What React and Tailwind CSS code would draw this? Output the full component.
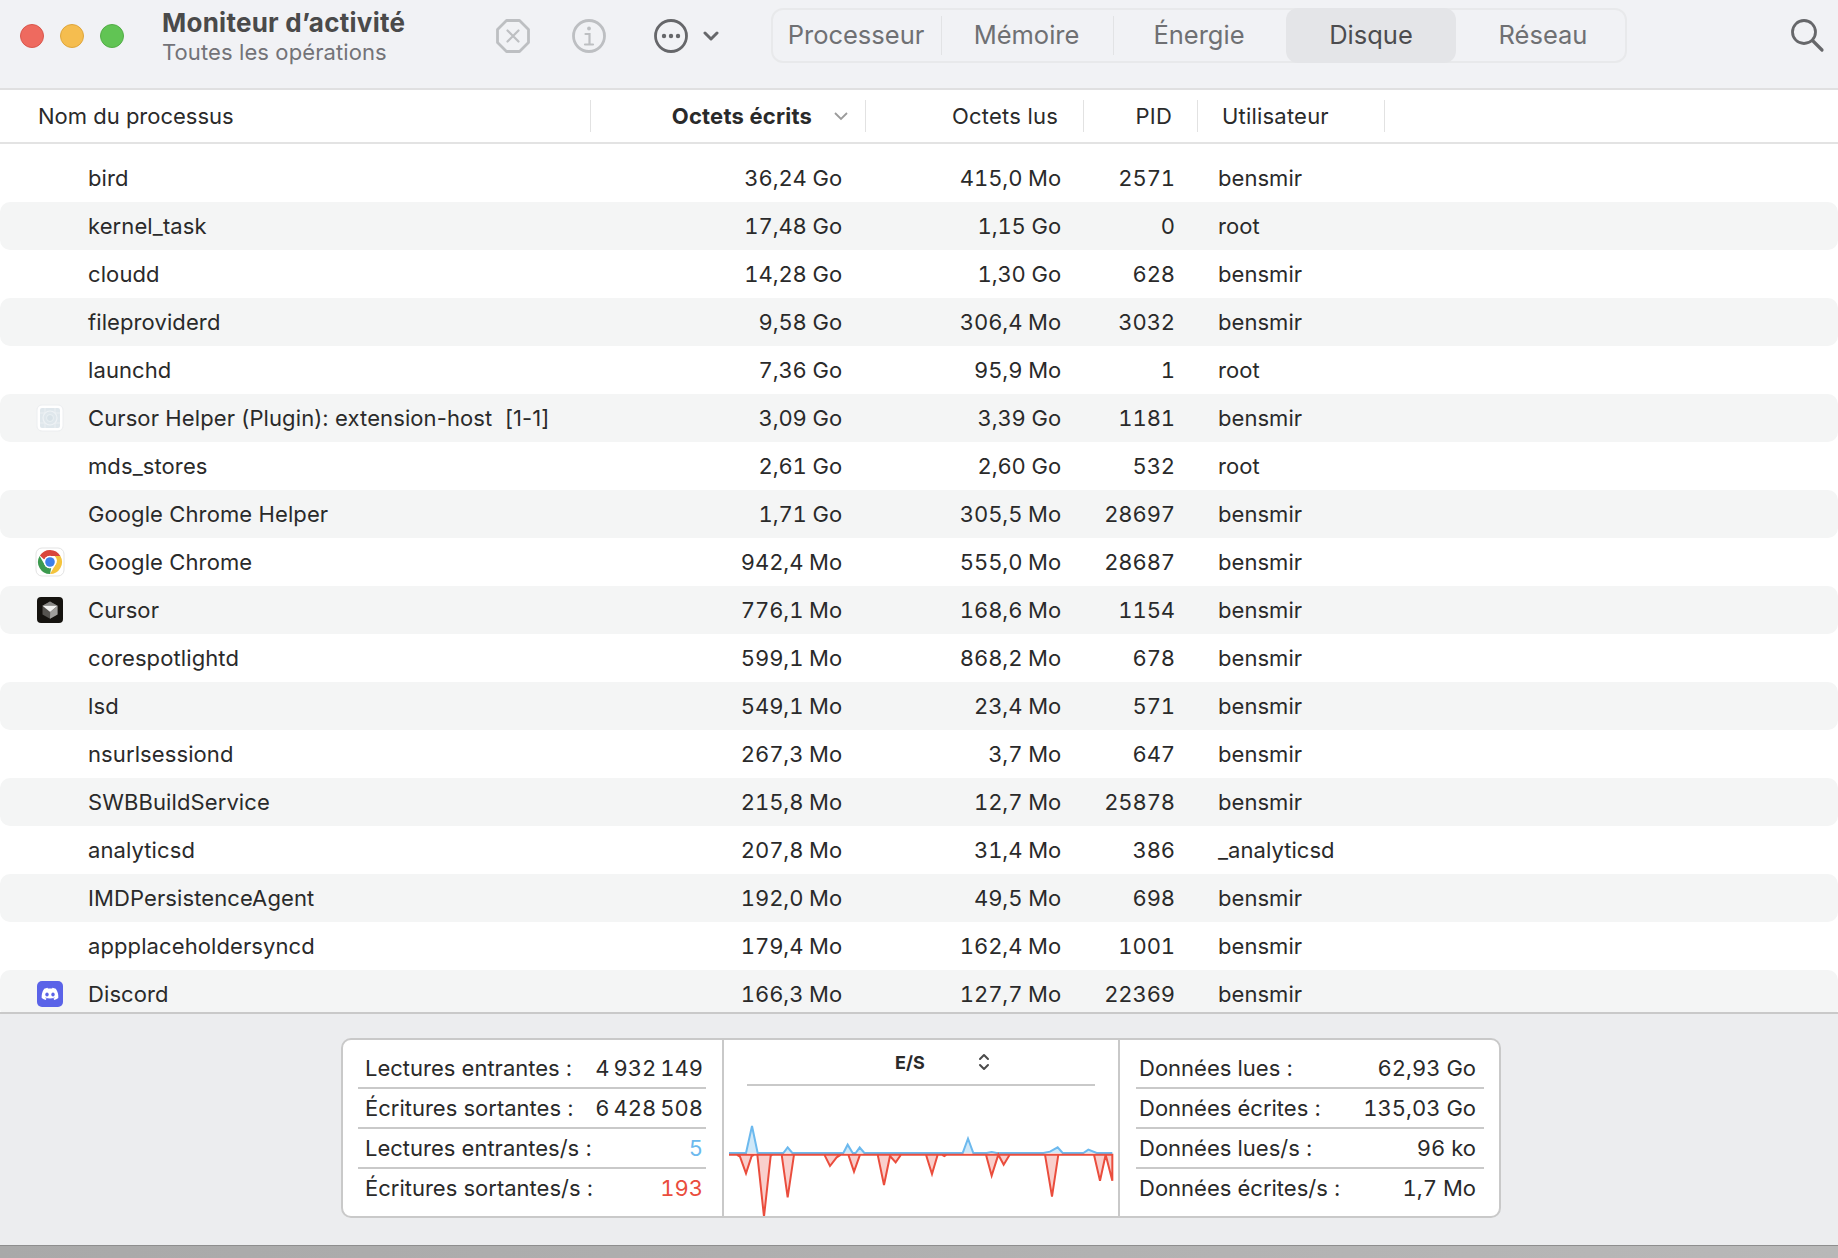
import React from "react";

const F = { fontFamily: "Inter, 'Liberation Sans', sans-serif" };

const rows = [
  ["bird", "36,24 Go", "415,0 Mo", "2571", "bensmir"],
  ["kernel_task", "17,48 Go", "1,15 Go", "0", "root"],
  ["cloudd", "14,28 Go", "1,30 Go", "628", "bensmir"],
  ["fileproviderd", "9,58 Go", "306,4 Mo", "3032", "bensmir"],
  ["launchd", "7,36 Go", "95,9 Mo", "1", "root"],
  ["Cursor Helper (Plugin): extension-host  [1-1]", "3,09 Go", "3,39 Go", "1181", "bensmir", "plugin"],
  ["mds_stores", "2,61 Go", "2,60 Go", "532", "root"],
  ["Google Chrome Helper", "1,71 Go", "305,5 Mo", "28697", "bensmir"],
  ["Google Chrome", "942,4 Mo", "555,0 Mo", "28687", "bensmir", "chrome"],
  ["Cursor", "776,1 Mo", "168,6 Mo", "1154", "bensmir", "cursor"],
  ["corespotlightd", "599,1 Mo", "868,2 Mo", "678", "bensmir"],
  ["lsd", "549,1 Mo", "23,4 Mo", "571", "bensmir"],
  ["nsurlsessiond", "267,3 Mo", "3,7 Mo", "647", "bensmir"],
  ["SWBBuildService", "215,8 Mo", "12,7 Mo", "25878", "bensmir"],
  ["analyticsd", "207,8 Mo", "31,4 Mo", "386", "_analyticsd"],
  ["IMDPersistenceAgent", "192,0 Mo", "49,5 Mo", "698", "bensmir"],
  ["appplaceholdersyncd", "179,4 Mo", "162,4 Mo", "1001", "bensmir"],
  ["Discord", "166,3 Mo", "127,7 Mo", "22369", "bensmir", "discord"],
];

function PluginIcon() {
  return (
    <svg width="28" height="28" viewBox="0 0 28 28">
      <rect x="1" y="1" width="26" height="26" rx="5" fill="#fff" stroke="#eceef0" />
      <rect x="4" y="4" width="20" height="20" rx="2" fill="#dfe7ec" />
      <path d="M9 4v20M19 4v20M4 9h20M4 19h20" stroke="#eef2f5" strokeWidth="0.8" />
      <circle cx="14" cy="14" r="7" fill="#dfe7ec" stroke="#eef2f5" strokeWidth="1.2" />
      <circle cx="14" cy="14" r="3.500" fill="#d8e2e8" stroke="#eef2f5" strokeWidth="0.8" />
    </svg>
  );
}

function ChromeIcon() {
  return (
    <svg width="30" height="30" viewBox="0 0 30 30">
      <rect x="1" y="1" width="28" height="28" rx="6" fill="#fff" stroke="#e3e3e3" />
      <path d="M15 3a12 12 0 0 1 10.4 6H15a6 6 0 0 0-5.6 3.800L4.900 8.600A12 12 0 0 1 15 3z" fill="#d9463c" />
      <path d="M25.400 9A12 12 0 0 1 15 27l5.200-9a6 6 0 0 0-.6-9z" fill="#f4c33c" />
      <path d="M15 27A12 12 0 0 1 4.600 9l5.200 9a6 6 0 0 0 6.400 3z" fill="#3c9a4e" />
      <circle cx="15" cy="15" r="6.200" fill="#fff" />
      <circle cx="15" cy="15" r="4.800" fill="#3f7fe8" />
    </svg>
  );
}

function CursorIcon() {
  return (
    <svg width="26" height="26" viewBox="0 0 26 26">
      <rect width="26" height="26" rx="4" fill="#16130f" />
      <path d="M13 4.500l7.500 4.300v8.700L13 21.800 5.500 17.500V8.800z" fill="#56534f" />
      <path d="M5.500 8.800L13 4.500l7.500 4.300z" fill="#8a8885" />
      <path d="M5.500 8.800h15L13.200 15z" fill="#f4f3f1" />
      <path d="M20.500 8.800v8.700L13 21.800l.2-6.800z" fill="#a09e9b" />
    </svg>
  );
}

function DiscordIcon() {
  return (
    <svg width="26" height="26" viewBox="0 0 26 26">
      <rect width="26" height="26" rx="5" fill="#5a63e8" />
      <path
        d="M18.800 7.800a13 13 0 0 0-3.300-1l-.4.800a12 12 0 0 0-4.200 0l-.4-.8a13 13 0 0 0-3.300 1C5 11 4.500 14 4.700 17c1.400 1 2.700 1.600 4 2l.9-1.400-1.400-.7.300-.3c2.700 1.200 6.200 1.200 9 0l.3.300-1.400.7.900 1.400c1.300-.4 2.600-1 4-2 .3-3.500-.5-6.300-2.500-9.200z"
        fill="#fff"
      />
      <ellipse cx="10" cy="13.500" rx="1.700" ry="1.900" fill="#5a63e8" />
      <ellipse cx="16" cy="13.500" rx="1.700" ry="1.900" fill="#5a63e8" />
    </svg>
  );
}

const icons = {
  plugin: <PluginIcon />,
  chrome: <ChromeIcon />,
  cursor: <CursorIcon />,
  discord: <DiscordIcon />,
};

function Row({ r, i }) {
  return (
    <div
      className={
        "grid grid-cols-[100px_500px_242px_219px_114px_1fr] h-[48px] shrink-0 items-center text-[22px] text-[#2a2a2a] rounded-[10px] " +
        (i % 2 === 1 ? "bg-[#f4f5f5]" : "bg-white")
      }
    >
      <div className="flex justify-center w-[100px]">{r[5] ? icons[r[5]] : null}</div>
      <div className="-ml-[12px] whitespace-pre tracking-[0.1px]">{r[0]}</div>
      <div className="text-right tabular-nums tracking-[-0.1px]">{r[1]}</div>
      <div className="text-right tabular-nums tracking-[-0.1px]">{r[2]}</div>
      <div className="text-right tabular-nums tracking-[-0.1px]">{r[3]}</div>
      <div className="pl-[43px] tracking-[0.05px]">{r[4]}</div>
    </div>
  );
}

function HeadCell({ w, right, children }) {
  return (
    <div
      className={
        "h-[32px] flex items-center border-r border-[#e2e2e2] shrink-0 " + (right ? "justify-end" : "")
      }
      style={{ width: w }}
    >
      {children}
    </div>
  );
}

function StatRow({ label, value, cls, last, right }) {
  return (
    <div
      className={
        "flex justify-between items-center text-[22px] text-[#2a2a2a] " +
        (right ? "pl-[3px] pr-[8px] " : "pl-[7px] pr-[3px] ") +
        (last ? "h-[38px]" : "h-[40px] border-b-2 border-[#c9c9c9]")
      }
    >
      <span>{label}</span>
      <span className={"tabular-nums " + (cls || "")}>{value}</span>
    </div>
  );
}

function Chart() {
  return (
    <svg width="395" height="127" viewBox="27 180 1185 381" className="block">
      <path
        d="M42 369 H93 L111 288 L128 369 H205 L218 352 L232 369 H385 L398 344 L413 369 H422 L434 352 L448 369 H743 L759 326 L775 369 H815 L830 366 L845 369 H985 L1005 365 L1028 352 L1043 369 H1105 L1120 359 L1145 369 H1192"
        fill="#cfe8f8"
        stroke="#6cb9ee"
        strokeWidth="6"
      />
      <path
        d="M42 374 H65 L75 380 L93 430 L110 378 L118 374 H127 L147 560 L167 378 L172 374 H200 L218 502 L237 374 H328 L345 408 L365 382 L378 374 H400 L417 425 L435 374 H488 L507 465 L525 378 L542 397 L558 374 H633 L651 432 L668 374 H680 L688 378 L695 374 H813 L830 437 L850 374 L866 404 L884 374 H990 L1011 500 L1030 374 H1137 L1155 452 L1172 374 L1192 452 V374 Z"
        fill="#f9cfcc"
        stroke="#ea4d3d"
        strokeWidth="6"
        strokeLinejoin="miter"
      />
    </svg>
  );
}

export default function App() {
  return (
    <div className="w-[1838px] h-[1258px] overflow-hidden flex flex-col bg-white" style={F}>
      {/* toolbar */}
      <div className="h-[90px] shrink-0 bg-[#f1f2f5] border-b-2 border-[#e0e0e1] flex items-start">
        <div className="flex gap-[16px] ml-[20px] mt-[24px] w-[142px]">
          <span className="w-[24px] h-[24px] rounded-full bg-[#ee6a5f] border border-[#d9574d]" />
          <span className="w-[24px] h-[24px] rounded-full bg-[#f5bd4f] border border-[#dfa63c]" />
          <span className="w-[24px] h-[24px] rounded-full bg-[#61c454] border border-[#53ad47]" />
        </div>
        <div className="w-[333px] mt-[6px]">
          <div className="text-[26px] leading-[33px] font-bold text-[#4a4a4a] tracking-[0.25px] whitespace-nowrap">Moniteur d’activité</div>
          <div className="text-[22px] leading-[26px] text-[#737378] tracking-[0.1px] whitespace-nowrap">Toutes les opérations</div>
        </div>
        <div className="flex items-center h-[71px] w-[276px]">
          <svg width="36" height="36" viewBox="0 0 36 36" fill="none" stroke="#bdbfc2" strokeWidth="2.800">
            <path d="M11.500 2.500h13l9 9v13l-9 9h-13l-9-9v-13z" strokeLinejoin="round" />
            <path d="M12.500 12.500l11 11M23.500 12.500l-11 11" strokeWidth="2.200" strokeLinecap="round" />
          </svg>
          <svg width="36" height="36" viewBox="0 0 36 36" fill="none" stroke="#bdbfc2" strokeWidth="2.800" className="ml-[40px]">
            <circle cx="18" cy="18" r="15.500" />
            <circle cx="18" cy="10.500" r="1.900" fill="#bdbfc2" stroke="none" />
            <path d="M14.500 16h4v10M14 26.500h8" strokeWidth="2.200" strokeLinecap="round" />
          </svg>
          <svg width="36" height="36" viewBox="0 0 36 36" fill="none" stroke="#66676a" strokeWidth="2.800" className="ml-[46px]">
            <circle cx="18" cy="18" r="15.500" />
            <circle cx="11" cy="18" r="2.200" fill="#66676a" stroke="none" />
            <circle cx="18" cy="18" r="2.200" fill="#66676a" stroke="none" />
            <circle cx="25" cy="18" r="2.200" fill="#66676a" stroke="none" />
          </svg>
          <svg width="16" height="12" viewBox="0 0 16 12" fill="none" stroke="#66676a" strokeWidth="3" strokeLinecap="round" strokeLinejoin="round" className="ml-[14px]">
            <path d="M2 3l6 6 6-6" />
          </svg>
        </div>
        <div className="mt-[8px] w-[856px] h-[55px] rounded-[12px] border-2 border-[#e8e9eb] flex items-center text-[25.500px] text-[#6f7073]">
          <div className="w-[169px] h-[39px] pr-[2px] flex items-center justify-center border-r border-[#e2e3e5]">Processeur</div>
          <div className="w-[172px] h-[39px] pr-[2px] flex items-center justify-center border-r border-[#e2e3e5]">Mémoire</div>
          <div className="w-[172px] h-[39px] pr-[2px] flex items-center justify-center">Énergie</div>
          <div className="w-[170px] h-[55px] flex items-center justify-center bg-[#e4e5e8] rounded-[12px] text-[#4c4c4f]">Disque</div>
          <div className="flex-1 pl-[5px] flex items-center justify-center">Réseau</div>
        </div>
        <svg width="36" height="36" viewBox="0 0 36 36" fill="none" stroke="#66676a" strokeWidth="2.800" strokeLinecap="round" className="ml-[162px] mt-[17px]">
          <circle cx="15" cy="15" r="11.500" />
          <path d="M23.500 23.500L33 33" strokeWidth="3.200" />
        </svg>
      </div>

      {/* header */}
      <div className="h-[54px] shrink-0 border-b-2 border-[#e3e3e3] bg-white flex items-center text-[22px] tracking-[0.2px] text-[#2a2a2a]">
        <HeadCell w="591px"><span className="pl-[38px] tracking-normal">Nom du processus</span></HeadCell>
        <HeadCell w="275px" right>
          <span className="font-bold">Octets écrits</span>
          <svg width="14" height="9" viewBox="0 0 14 9" fill="none" stroke="#9b9b9b" strokeWidth="1.800" className="ml-[22px] mr-[17px]">
            <path d="M1 1l6 6 6-6" />
          </svg>
        </HeadCell>
        <HeadCell w="218px" right><span className="pr-[25px]">Octets lus</span></HeadCell>
        <HeadCell w="114px" right><span className="pr-[25px]">PID</span></HeadCell>
        <HeadCell w="187px"><span className="pl-[24px]">Utilisateur</span></HeadCell>
      </div>

      {/* table */}
      <div className="h-[868px] shrink-0 overflow-hidden bg-white flex flex-col pt-[10px]">
        {rows.map((r, i) => (
          <Row key={r[0]} r={r} i={i} />
        ))}
      </div>

      {/* bottom panel */}
      <div className="h-[234px] shrink-0 bg-[#ecedef] border-t-2 border-[#c9c9c9] border-b border-b-[#8e8e8e] flex justify-start pt-[24px] pl-[341px]">
        <div className="w-[1160px] h-[180px] bg-white border-2 border-[#c9c9c9] rounded-[10px] flex">
          <div className="w-[381px] shrink-0 pl-[15px] pr-[16px] pt-[9px] border-r-2 border-[#c9c9c9]">
            <StatRow label="Lectures entrantes :" value={"4\u202f932\u202f149"} />
            <StatRow label="Écritures sortantes :" value={"6\u202f428\u202f508"} />
            <StatRow label="Lectures entrantes/s :" value="5" cls="text-[#6cb9ee]" />
            <StatRow label="Écritures sortantes/s :" value="193" cls="text-[#ea4d3d]" last />
          </div>
          <div className="w-[396px] shrink-0 flex flex-col border-r-2 border-[#c9c9c9] overflow-hidden">
            <div className="mx-[23px] h-[46px] shrink-0 border-b-2 border-[#c9c9c9] flex items-center text-[18px] font-bold text-[#2a2a2a]">
              <span className="ml-[148px]">E/S</span>
              <svg width="12" height="18" viewBox="0 0 12 18" fill="none" stroke="#4a4a4a" strokeWidth="2" strokeLinecap="round" strokeLinejoin="round" className="ml-[53px]">
                <path d="M2 6l4-4 4 4M2 12l4 4 4-4" />
              </svg>
            </div>
            <div className="mt-[4px]"><Chart /></div>
          </div>
          <div className="flex-1 pl-[16px] pr-[15px] pt-[9px]">
            <StatRow right label="Données lues :" value="62,93 Go" />
            <StatRow right label="Données écrites :" value="135,03 Go" />
            <StatRow right label="Données lues/s :" value="96 ko" />
            <StatRow right label="Données écrites/s :" value="1,7 Mo" last />
          </div>
        </div>
      </div>
      <div className="flex-1 bg-linear-to-r from-[#a9a9a9] to-[#b8b8b8]" />
    </div>
  );
}
